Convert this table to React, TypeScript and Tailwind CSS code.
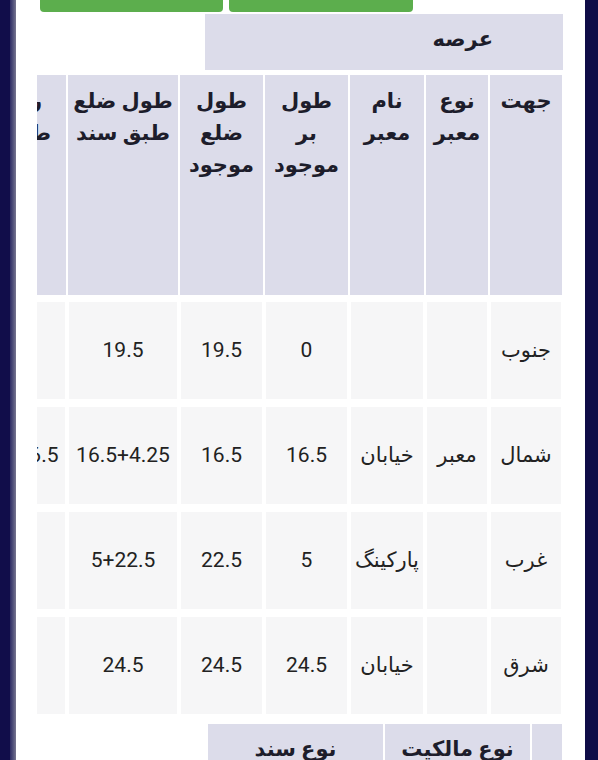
import React from 'react';

const columns = [
  { key: 'dir', width: 'w-[74px]', title: ['جهت'] },
  { key: 'type', width: 'w-[64px]', title: ['نوع', 'معبر'] },
  { key: 'name', width: 'w-[76px]', title: ['نام', 'معبر'] },
  { key: 'front', width: 'w-[85px]', title: ['طول', 'بر', 'موجود'] },
  { key: 'side', width: 'w-[85px]', title: ['طول', 'ضلع', 'موجود'] },
  { key: 'deed', width: 'w-[112px]', title: ['طول ضلع', 'طبق سند'] },
];

const rows = [
  { dir: 'جنوب', type: '', name: '', front: '0', side: '19.5', deed: '19.5', extra: '' },
  { dir: 'شمال', type: 'معبر', name: 'خیابان', front: '16.5', side: '16.5', deed: '16.5+4.25', extra: '16.5' },
  { dir: 'غرب', type: '', name: 'پارکینگ', front: '5', side: '22.5', deed: '5+22.5', extra: '' },
  { dir: 'شرق', type: '', name: 'خیابان', front: '24.5', side: '24.5', deed: '24.5', extra: '' },
];

const font = { fontFamily: 'Roboto, "DejaVu Sans", sans-serif' };

const headCell = 'mx-px h-[220px] bg-[#dcdcea] pt-[10px] text-[21px] font-bold leading-[32px] text-[#1d1d2b]';
const bodyCell =
  'mx-[2px] flex h-[97px] items-center justify-center whitespace-nowrap bg-[#f6f6f7] text-[21px] text-[#222]';

const App = () => {
  return (
    <div className="flex h-[760px] w-[598px] overflow-hidden bg-[#0f0c47]" style={font}>
      <div className="w-[10px] shrink-0 bg-[#110d4a]" />
      <div className="w-[6px] shrink-0 bg-gradient-to-r from-[#2e2b63] to-[#77758f]" />

      <div className="w-[569px] shrink-0 bg-white">
        {/* action buttons, scrolled mostly out of view */}
        <div className="flex gap-[6px] pl-[24px]">
          <div className="h-[12px] w-[183px] rounded-b-[4px] bg-[#5cae4d]" />
          <div className="h-[12px] w-[184px] rounded-b-[4px] bg-[#5cae4d]" />
        </div>

        <div className="pl-[21px] pr-[22px]">
          <div dir="rtl" className="mt-[2px] flex">
            <div className="flex h-[56px] w-[358px] items-center bg-[#dcdcea] pb-[4px] pr-[70px] text-[21px] font-bold text-[#1d1d2b]">
              عرصه
            </div>
          </div>

          <div dir="rtl" className="mt-[5px] overflow-hidden">
            <div className="flex w-max">
              {columns.map((col) => (
                <div key={col.key} className={`${col.width} shrink-0`}>
                  <div className={`${headCell} text-center`}>
                    {col.title.map((line, i) => (
                      <div key={i} className="whitespace-nowrap">{line}</div>
                    ))}
                  </div>
                  <div className="mt-[7px] flex flex-col gap-[8px]">
                    {rows.map((row, i) => (
                      <div key={i} className={bodyCell}>
                        {row[col.key as keyof typeof row]}
                      </div>
                    ))}
                  </div>
                </div>
              ))}

              {/* column cut off by the horizontal scroll */}
              <div className="w-[58px] shrink-0">
                <div className={`${headCell} overflow-hidden text-right`}>
                  <div className="whitespace-nowrap pr-[24px]">ردیف</div>
                  <div className="whitespace-nowrap pr-[15px]">طبق سند</div>
                </div>
                <div className="mt-[7px] flex flex-col gap-[8px]">
                  {rows.map((row, i) => (
                    <div key={i} className={bodyCell}>
                      {row.extra}
                    </div>
                  ))}
                </div>
              </div>
            </div>
          </div>

          <div dir="rtl" className="mt-[10px] flex">
            <div className="mx-px h-[60px] w-[30px] bg-[#dcdcea]" />
            <div className="mx-px h-[60px] w-[145px] bg-[#dcdcea] pt-[9px] text-center text-[21px] font-bold leading-[32px] text-[#1d1d2b]">
              نوع مالکیت
            </div>
            <div className="mx-px h-[60px] w-[175px] bg-[#dcdcea] pt-[9px] text-center text-[21px] font-bold leading-[32px] text-[#1d1d2b]">
              نوع سند
            </div>
          </div>
        </div>
      </div>

      <div className="flex-1 bg-[#0f0c47]" />
    </div>
  );
};

export default App;
